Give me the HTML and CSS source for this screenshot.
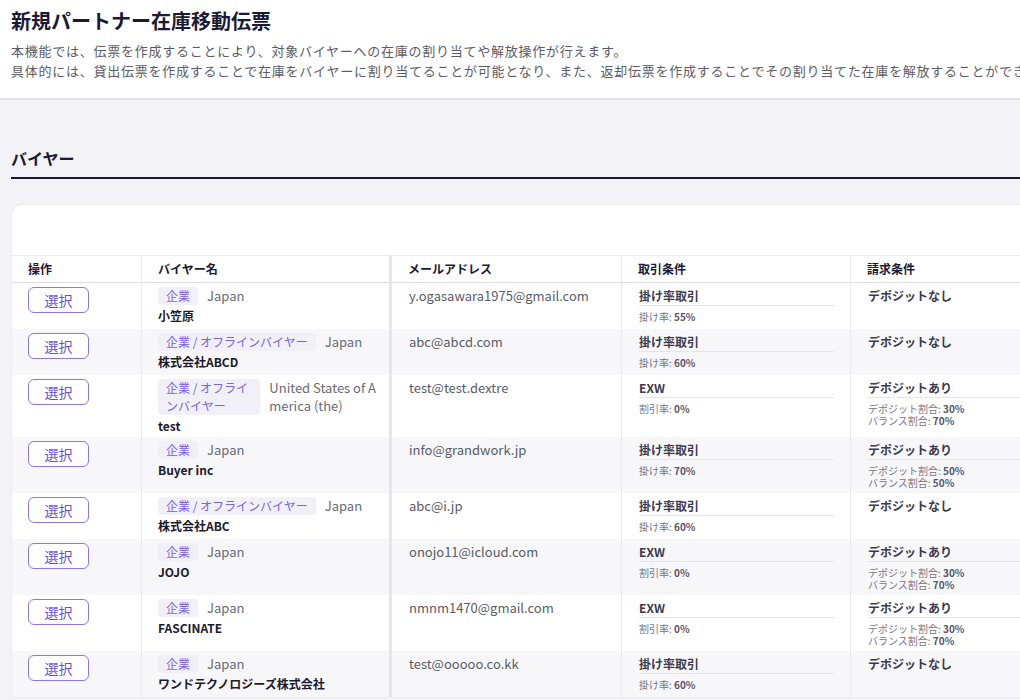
FILE: index.html
```html
<!DOCTYPE html>
<html lang="ja">
<head>
<meta charset="utf-8">
<title>新規パートナー在庫移動伝票</title>
<link rel="stylesheet" href="styles.css">
</head>
<body>
<div class="page">
  <header class="page-header">
    <h1 class="page-title">新規パートナー在庫移動伝票</h1>
    <p class="lead">本機能では、伝票を作成することにより、対象バイヤーへの在庫の割り当てや解放操作が行えます。<br>具体的には、貸出伝票を作成することで在庫をバイヤーに割り当てることが可能となり、また、返却伝票を作成することでその割り当てた在庫を解放することができます。</p>
  </header>
  <main class="main">
    <h2 class="section-title">バイヤー</h2>
    <div class="card">
      <table class="buyers">
        <colgroup>
          <col class="w1"><col class="w2"><col class="w3"><col class="w4"><col class="w5">
        </colgroup>
        <thead>
          <tr>
            <th class="c1">操作</th>
            <th class="c2">バイヤー名</th>
            <th class="c3">メールアドレス</th>
            <th class="c4">取引条件</th>
            <th class="c5">請求条件</th>
          </tr>
        </thead>
        <tbody>
          <tr>
            <td class="c1"><button class="btn">選択</button></td>
            <td class="c2"><div class="meta"><span class="tag">企業</span><span class="country">Japan</span></div><div class="name">小笠原</div></td>
            <td class="c3 email">y.ogasawara1975@gmail.com</td>
            <td class="c4"><div class="cond-title ruled">掛け率取引</div><div class="sub">掛け率: <b>55%</b></div></td>
            <td class="c5"><div class="cond-title">デポジットなし</div></td>
          </tr>
          <tr>
            <td class="c1"><button class="btn">選択</button></td>
            <td class="c2"><div class="meta"><span class="tag">企業 / オフラインバイヤー</span><span class="country">Japan</span></div><div class="name">株式会社ABCD</div></td>
            <td class="c3 email">abc@abcd.com</td>
            <td class="c4"><div class="cond-title ruled">掛け率取引</div><div class="sub">掛け率: <b>60%</b></div></td>
            <td class="c5"><div class="cond-title">デポジットなし</div></td>
          </tr>
          <tr>
            <td class="c1"><button class="btn">選択</button></td>
            <td class="c2"><div class="meta"><span class="tag">企業 / オフラインバイヤー</span><span class="country">United States of America (the)</span></div><div class="name">test</div></td>
            <td class="c3 email">test@test.dextre</td>
            <td class="c4"><div class="cond-title ruled">EXW</div><div class="sub">割引率: <b>0%</b></div></td>
            <td class="c5"><div class="cond-title ruled">デポジットあり</div><div class="sub"><div>デポジット割合: <b>30%</b></div><div>バランス割合: <b>70%</b></div></div></td>
          </tr>
          <tr>
            <td class="c1"><button class="btn">選択</button></td>
            <td class="c2"><div class="meta"><span class="tag">企業</span><span class="country">Japan</span></div><div class="name">Buyer inc</div></td>
            <td class="c3 email">info@grandwork.jp</td>
            <td class="c4"><div class="cond-title ruled">掛け率取引</div><div class="sub">掛け率: <b>70%</b></div></td>
            <td class="c5"><div class="cond-title ruled">デポジットあり</div><div class="sub"><div>デポジット割合: <b>50%</b></div><div>バランス割合: <b>50%</b></div></div></td>
          </tr>
          <tr>
            <td class="c1"><button class="btn">選択</button></td>
            <td class="c2"><div class="meta"><span class="tag">企業 / オフラインバイヤー</span><span class="country">Japan</span></div><div class="name">株式会社ABC</div></td>
            <td class="c3 email">abc@i.jp</td>
            <td class="c4"><div class="cond-title ruled">掛け率取引</div><div class="sub">掛け率: <b>60%</b></div></td>
            <td class="c5"><div class="cond-title">デポジットなし</div></td>
          </tr>
          <tr>
            <td class="c1"><button class="btn">選択</button></td>
            <td class="c2"><div class="meta"><span class="tag">企業</span><span class="country">Japan</span></div><div class="name">JOJO</div></td>
            <td class="c3 email">onojo11@icloud.com</td>
            <td class="c4"><div class="cond-title ruled">EXW</div><div class="sub">割引率: <b>0%</b></div></td>
            <td class="c5"><div class="cond-title ruled">デポジットあり</div><div class="sub"><div>デポジット割合: <b>30%</b></div><div>バランス割合: <b>70%</b></div></div></td>
          </tr>
          <tr>
            <td class="c1"><button class="btn">選択</button></td>
            <td class="c2"><div class="meta"><span class="tag">企業</span><span class="country">Japan</span></div><div class="name">FASCINATE</div></td>
            <td class="c3 email">nmnm1470@gmail.com</td>
            <td class="c4"><div class="cond-title ruled">EXW</div><div class="sub">割引率: <b>0%</b></div></td>
            <td class="c5"><div class="cond-title ruled">デポジットあり</div><div class="sub"><div>デポジット割合: <b>30%</b></div><div>バランス割合: <b>70%</b></div></div></td>
          </tr>
          <tr>
            <td class="c1"><button class="btn">選択</button></td>
            <td class="c2"><div class="meta"><span class="tag">企業</span><span class="country">Japan</span></div><div class="name">ワンドテクノロジーズ株式会社</div></td>
            <td class="c3 email">test@ooooo.co.kk</td>
            <td class="c4"><div class="cond-title ruled">掛け率取引</div><div class="sub">掛け率: <b>60%</b></div></td>
            <td class="c5"><div class="cond-title">デポジットなし</div></td>
          </tr>
        </tbody>
      </table>
    </div>
  </main>
</div>
</body>
</html>
```
FILE: styles.css
```css
html, body {
  margin: 0;
  height: 700px;
  overflow: hidden;
}
body {
  background: #f3f3f7;
  font-family: "Noto Sans CJK JP", "Noto Sans", sans-serif;
  color: #1b1a35;
}
.page {
  width: 1400px;
}
.page-header {
  background: #fff;
  padding: 7px 11px 17px;
  border-bottom: 2px solid #e1e1e8;
}
.page-title {
  margin: 0;
  font-size: 20px;
  line-height: 28px;
  font-weight: 700;
  color: #1b1a35;
}
.lead {
  margin: 6px 0 0;
  font-size: 13px;
  line-height: 20px;
  letter-spacing: 0.75px;
  color: #5b5b68;
  white-space: nowrap;
}
.main {
  padding: 46px 0 0 11px;
}
.section-title {
  margin: 0;
  font-size: 16px;
  line-height: 24px;
  font-weight: 700;
  padding-bottom: 7px;
  border-bottom: 2px solid #1b1a35;
}
.card {
  margin-top: 25px;
  background: #fff;
  border: 1px solid #ececf1;
  border-right: 0;
  border-radius: 10px 0 0 0;
  padding-top: 50px;
}
.buyers {
  border-collapse: separate;
  border-spacing: 0;
  table-layout: fixed;
  width: 1100px;
}
.w1 { width: 130px; }
.w2 { width: 250px; }
.w3 { width: 230px; }
.w4 { width: 229px; }
.w5 { width: 261px; }
.buyers th {
  text-align: left;
  font-size: 12px;
  font-weight: 700;
  line-height: 26px;
  color: #1b1a35;
  padding: 0 16px 0 16px;
  border-top: 1px solid #ececf1;
  border-bottom: 1px solid #dedcec;
}
.buyers tbody tr {
  height: 46px;
}
.buyers td {
  vertical-align: top;
  padding: 4px 16px 4px 17px;
}
.buyers td.c1, .buyers th.c1 { padding-left: 16px; }
.buyers td.c2 { padding: 4px 10px 2px 16px; }
.buyers tbody tr:nth-child(even) td {
  background: #f7f7fa;
}
.c1, .c3, .c4 {
  border-right: 1px solid #e7e7ee;
}
.c2 {
  border-right: 3px solid #e6e4f2;
}
.btn {
  display: block;
  width: 61px;
  height: 26px;
  box-sizing: border-box;
  padding: 0;
  border: 1.5px solid #8d75e6;
  border-radius: 6px;
  background: #fff;
  color: #6a50d6;
  font-family: inherit;
  font-size: 14px;
  line-height: 22px;
  text-align: center;
}
.meta {
  display: flex;
  align-items: flex-start;
  gap: 9px;
  line-height: 18px;
}
.tag {
  flex: 0 1 auto;
  background: #f0f0f6;
  border-radius: 4px;
  padding: 0 8px;
  font-size: 12px;
  color: #7a62e2;
}
.country {
  flex: 0 1 auto;
  font-size: 13px;
  color: #6a6a77;
  word-break: break-all;
}
.name {
  margin-top: 2px;
  font-size: 12px;
  line-height: 18px;
  font-weight: 700;
  color: #1b1a2e;
}
.email {
  font-size: 13px;
  line-height: 18px;
  color: #595b68;
}
.cond-title {
  font-size: 12px;
  line-height: 18px;
  font-weight: 700;
  color: #3a3a4e;
}
.cond-title.ruled {
  border-bottom: 1px solid #e4e4ea;
}
.sub {
  margin-top: 5px;
  font-size: 10px;
  line-height: 12px;
  color: #74747f;
}
.sub div {
  height: 12px;
}
.sub b {
  font-weight: 700;
  color: #55556a;
}
```
